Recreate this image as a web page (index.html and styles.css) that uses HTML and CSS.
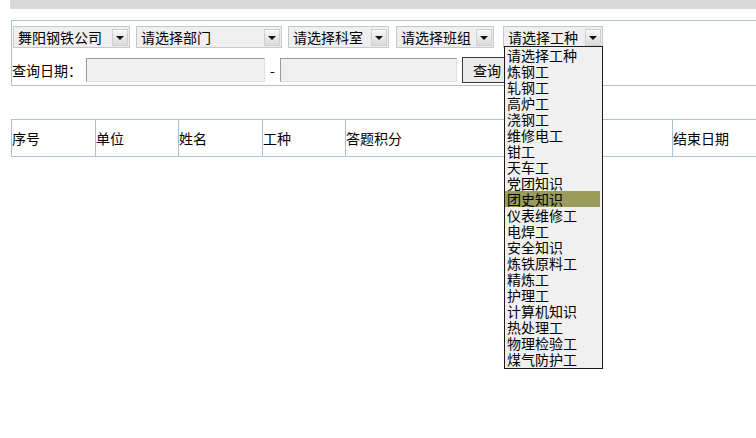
FILE: index.html
```html
<!DOCTYPE html>
<html lang="zh-CN">
<head>
<meta charset="utf-8">
<title>答题积分查询</title>
<link rel="stylesheet" href="styles.css">
</head>
<body>
<div class="page">
  <div class="topbar"></div>
  <div class="filter">
    <div class="row sel-row">
      <div class="sel s1"><span class="val">舞阳钢铁公司</span><span class="btn"><i></i></span></div>
      <div class="sel s2"><span class="val">请选择部门</span><span class="btn"><i></i></span></div>
      <div class="sel s3"><span class="val">请选择科室</span><span class="btn"><i></i></span></div>
      <div class="sel s4"><span class="val">请选择班组</span><span class="btn"><i></i></span></div>
      <div class="sel s5"><span class="val">请选择工种</span><span class="btn"><i></i></span>
        <ul class="list">
          <li>请选择工种</li>
          <li>炼钢工</li>
          <li>轧钢工</li>
          <li>高炉工</li>
          <li>浇钢工</li>
          <li>维修电工</li>
          <li>钳工</li>
          <li>天车工</li>
          <li>党团知识</li>
          <li class="hl">团史知识</li>
          <li>仪表维修工</li>
          <li>电焊工</li>
          <li>安全知识</li>
          <li>炼铁原料工</li>
          <li>精炼工</li>
          <li>护理工</li>
          <li>计算机知识</li>
          <li>热处理工</li>
          <li>物理检验工</li>
          <li>煤气防护工</li>
        </ul>
      </div>
    </div>
    <div class="row date-row">
      <span class="label">查询日期：</span>
      <span class="inp i1"></span>
      <span class="dash">-</span>
      <span class="inp i2"></span>
      <span class="qbtn">查询</span>
    </div>
  </div>
  <table class="grid">
    <tr>
      <td class="c1">序号</td>
      <td class="c2">单位</td>
      <td class="c3">姓名</td>
      <td class="c4">工种</td>
      <td class="c5">答题积分</td>
      <td class="c6">结束日期</td>
    </tr>
  </table>
</div>
</body>
</html>
```

FILE: styles.css
```css
html, body {
  margin: 0;
  padding: 0;
  background: #fff;
  overflow: hidden;
}
body {
  font-family: "Noto Sans CJK SC", "DejaVu Sans", sans-serif;
  font-size: 14px;
  color: #000;
}
.page {
  width: 860px;
  height: 438px;
}
.topbar {
  margin-left: 10px;
  height: 9px;
  background: #d9d9d9;
}
.filter {
  margin-top: 11px;
  margin-left: 11px;
  border: 1px solid #aec0d6;
  height: 64px;
  box-sizing: content-box;
}
.row {
  display: flex;
  align-items: center;
}
.sel-row {
  margin-top: 5px;
  margin-left: 1px;
  height: 22px;
}
.sel {
  position: relative;
  height: 22px;
  box-sizing: border-box;
  border: 1px solid #c8c8c8;
  background: #efefef;
  display: flex;
  align-items: center;
  margin-right: 6px;
}
.sel .val {
  flex: 1;
  padding-left: 4px;
  line-height: 18px;
  white-space: nowrap;
  overflow: hidden;
}
.sel .btn {
  width: 16px;
  height: 17px;
  margin-right: 1px;
  box-sizing: border-box;
  border: 1px solid #cfcfcf;
  background: linear-gradient(#f8f8f8, #dadada);
  display: flex;
  align-items: center;
  justify-content: center;
}
.sel .btn i {
  width: 0;
  height: 0;
  border-left: 4px solid transparent;
  border-right: 4px solid transparent;
  border-top: 4px solid #111;
  margin-top: 1px;
}
.s1 { width: 117px; }
.s2 { width: 146px; }
.s3 { width: 101px; margin-right: 7px; }
.s4 { width: 98px; margin-right: 9px; }
.s5 { width: 100px; margin-right: 0; }

.date-row {
  margin-top: 9px;
  height: 26px;
}
.label {
  width: 74px;
  line-height: 16px;
}
.inp {
  height: 24px;
  box-sizing: border-box;
  background: #efefef;
  border-top: 1px solid #9a9a9a;
  border-left: 1px solid #9a9a9a;
  border-right: 1px solid #e0e0e0;
  border-bottom: 1px solid #e0e0e0;
}
.i1 { width: 179px; }
.dash {
  width: 15px;
  text-align: center;
  line-height: 16px;
}
.i2 { width: 177px; }
.qbtn {
  margin-left: 5px;
  width: 62px;
  height: 26px;
  box-sizing: border-box;
  border: 1px solid #3a3a3a;
  background: #ebebeb;
  padding-left: 10px;
  line-height: 24px;
}

.list {
  position: absolute;
  left: 0;
  top: 19px;
  width: 99px;
  box-sizing: border-box;
  margin: 0;
  padding: 0 0 1px 0;
  list-style: none;
  border: 1px solid #1a1a1a;
  background: #f0f0f0;
  z-index: 10;
}
.list li {
  height: 16px;
  line-height: 16px;
  padding-left: 2px;
  margin-right: 2px;
  white-space: nowrap;
}
.list li.hl {
  background: #9b9b5a;
}

.grid {
  margin-top: 33px;
  margin-left: 11px;
  border-collapse: collapse;
  table-layout: fixed;
}
.grid td {
  border: 1px solid #aec0d6;
  height: 37px;
  padding: 0;
  box-sizing: border-box;
  vertical-align: middle;
  line-height: 16px;
}
.c1 { width: 84px; }
.c2 { width: 83px; }
.c3 { width: 84px; }
.c4 { width: 83px; }
.c5 { width: 327px; }
.c6 { width: 160px; }
```
